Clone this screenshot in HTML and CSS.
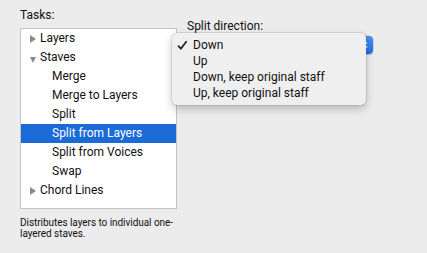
FILE: index.html
```html
<!DOCTYPE html>
<html>
<head>
<meta charset="utf-8">
<link rel="stylesheet" href="styles.css">
</head>
<body>
<div class="window">
  <div class="tasks">
    <div class="label">Tasks:</div>
    <div class="list">
      <div class="row"><span class="tri tri-right"></span>Layers</div>
      <div class="row"><span class="tri tri-down"></span>Staves</div>
      <div class="row child">Merge</div>
      <div class="row child">Merge to Layers</div>
      <div class="row child">Split</div>
      <div class="row child selected">Split from Layers</div>
      <div class="row child">Split from Voices</div>
      <div class="row child">Swap</div>
      <div class="row"><span class="tri tri-right"></span>Chord Lines</div>
    </div>
    <p class="desc">Distributes layers to individual one-layered staves.</p>
  </div>
  <div class="options">
    <div class="label">Split direction:</div>
    <div class="popup">
      <span class="popup-text">Down</span>
      <span class="popup-arrows">
        <svg width="6" height="10" viewBox="0 0 6 10"><path d="M0.8 3.6 L3 1.4 L5.2 3.6 M0.8 6.4 L3 8.6 L5.2 6.4" fill="none" stroke="#fff" stroke-width="1.2"/></svg>
      </span>
    </div>
    <div class="menu">
      <div class="item checked"><svg class="check" width="11" height="10" viewBox="0 0 11 10"><path d="M1 5.6 L3.9 8.6 L9.6 1.2" fill="none" stroke="#222" stroke-width="1.7"/></svg>Down</div>
      <div class="item">Up</div>
      <div class="item">Down, keep original staff</div>
      <div class="item">Up, keep original staff</div>
    </div>
  </div>
</div>
</body>
</html>
```

FILE: styles.css
```css
html, body {
  margin: 0;
  padding: 0;
}
body {
  background: #ececec;
  font-family: Roboto, "Noto Sans", sans-serif;
  color: #111;
  width: 427px;
  height: 253px;
  overflow: hidden;
}
.window {
  display: flex;
  gap: 10px;
  padding: 8px 0 0 20px;
}
.tasks {
  width: 157px;
  display: flex;
  flex-direction: column;
}
.label {
  font-size: 12px;
  line-height: 15px;
  height: 15px;
}
.list {
  margin-top: 5px;
  background: #fff;
  border: 1px solid #c3c3c3;
  height: 179px;
  display: flex;
  flex-direction: column;
}
.row {
  height: 19px;
  line-height: 19px;
  font-size: 12px;
  display: flex;
  align-items: center;
  padding-left: 9px;
  white-space: nowrap;
}
.row.child {
  padding-left: 31px;
}
.row.selected {
  background: #1a6ad8;
  color: #fff;
}
.tri {
  width: 10px;
  height: 10px;
  display: flex;
  align-items: center;
  justify-content: flex-start;
}
.tri-right::before {
  content: "";
  border-left: 6px solid #8a8a8a;
  border-top: 4px solid transparent;
  border-bottom: 4px solid transparent;
}
.tri-down::before {
  content: "";
  border-top: 6px solid #8a8a8a;
  border-left: 3.5px solid transparent;
  border-right: 3.5px solid transparent;
  margin-top: 4px;
}
.desc {
  margin: 8px 0 0;
  font-size: 10px;
  line-height: 11px;
  letter-spacing: -0.05px;
}
.options {
  position: relative;
  padding-top: 11px;
  width: 186px;
}
.popup {
  margin-top: 2px;
  height: 18px;
  background: #fff;
  border-radius: 4px;
  box-shadow: 0 0 0 0.5px rgba(0,0,0,0.2), 0 1px 1px rgba(0,0,0,0.15);
  display: flex;
  align-items: center;
  justify-content: space-between;
  font-size: 12px;
  overflow: hidden;
}
.popup-text {
  padding-left: 7px;
}
.popup-arrows {
  width: 16px;
  height: 100%;
  background: linear-gradient(#4d91f5, #1f6fe6);
  display: flex;
  align-items: center;
  justify-content: center;
}
.menu {
  position: absolute;
  left: -15px;
  top: 25px;
  width: 194px;
  height: 72px;
  box-sizing: border-box;
  padding: 3px 0 0;
  background: #efefef;
  border-radius: 5px;
  box-shadow: 0 0 0 0.5px rgba(0,0,0,0.18), 0 4px 10px rgba(0,0,0,0.22);
}
.item {
  height: 16px;
  line-height: 16px;
  font-size: 12px;
  padding-left: 21px;
  position: relative;
  white-space: nowrap;
}
.item:first-child {
  margin-top: 1px;
}
.check {
  position: absolute;
  left: 5px;
  top: 3px;
}
```
